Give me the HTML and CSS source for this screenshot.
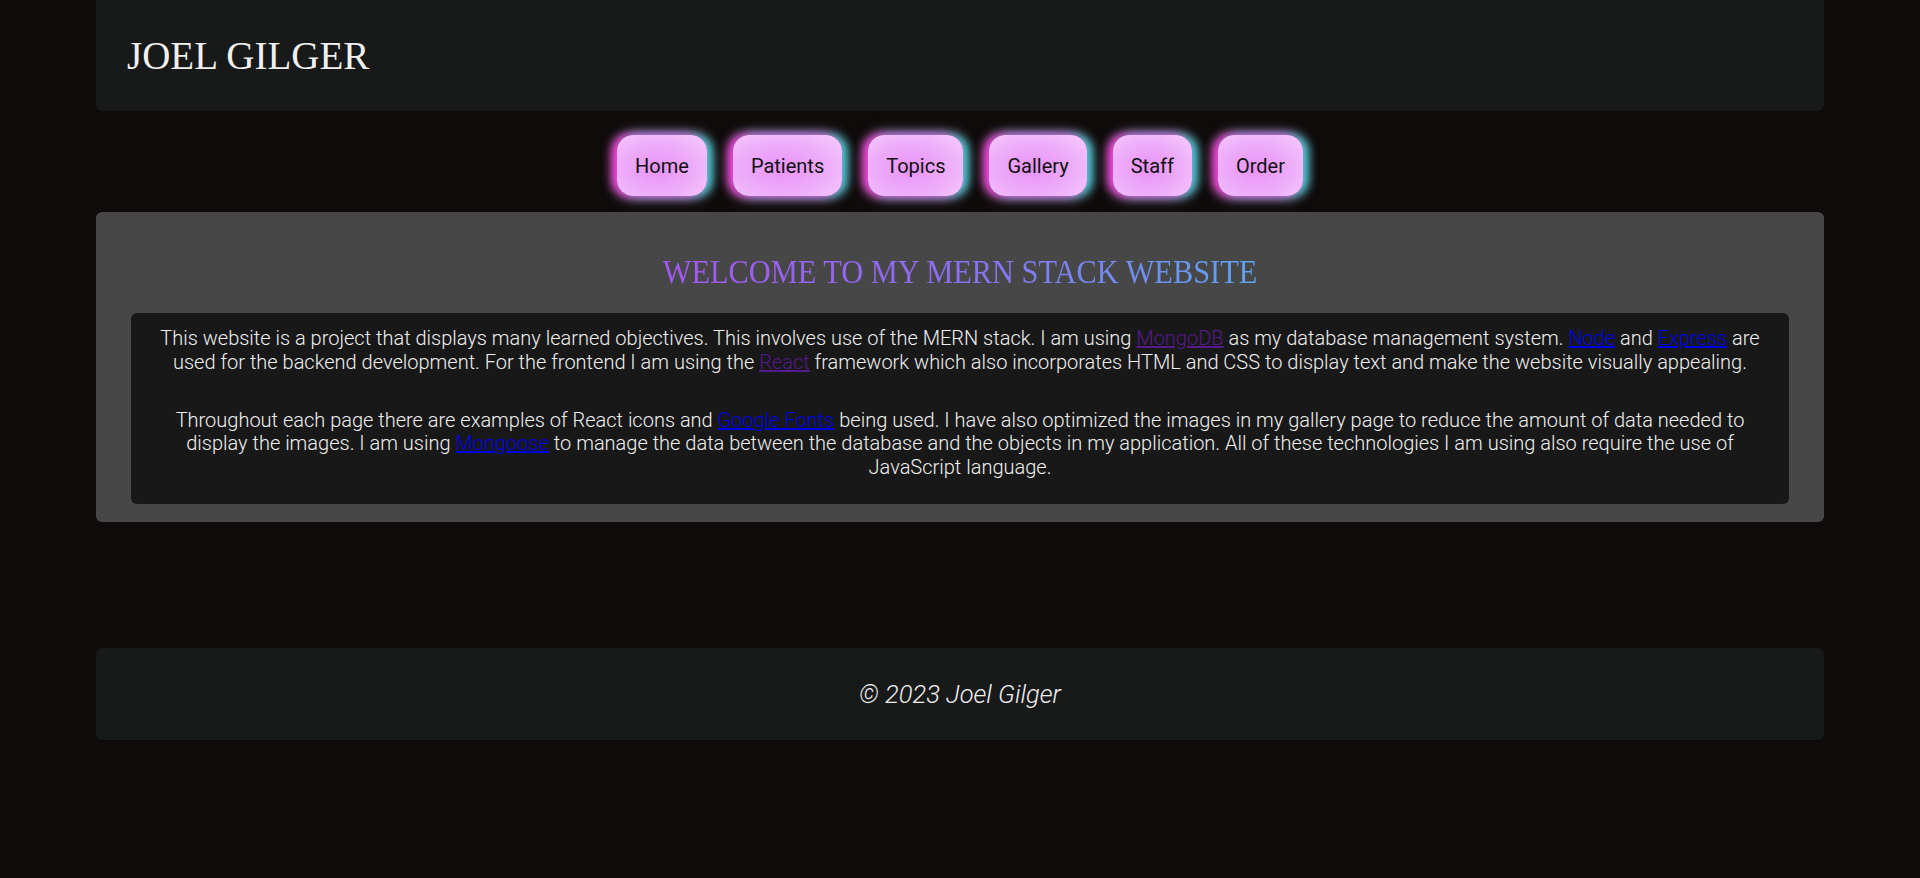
FILE: index.html
```html
<!DOCTYPE html>
<html lang="en">
<head>
<meta charset="utf-8">
<title>Joel Gilger</title>
<link rel="stylesheet" href="styles.css">
</head>
<body>
<header class="site-header">
  <h1 class="site-title">JOEL GILGER</h1>
</header>
<nav class="site-nav">
  <a class="nav-btn" href="#">Home</a>
  <a class="nav-btn" href="#">Patients</a>
  <a class="nav-btn" href="#">Topics</a>
  <a class="nav-btn" href="#">Gallery</a>
  <a class="nav-btn" href="#">Staff</a>
  <a class="nav-btn" href="#">Order</a>
</nav>
<main class="main">
  <h2 class="welcome">WELCOME TO MY MERN STACK WEBSITE</h2>
  <article class="intro">
    <p>This website is a project that displays many learned objectives. This involves use of the MERN stack. I am using <a class="visited" href="#">MongoDB</a> as my database management system. <a class="link" href="#">Node</a> and <a class="link" href="#">Express</a> are used for the backend development. For the frontend I am using the <a class="visited" href="#">React</a> framework which also incorporates HTML and CSS to display text and make the website visually appealing.</p>
    <p>Throughout each page there are examples of React icons and <a class="link" href="#">Google Fonts</a> being used. I have also optimized the images in my gallery page to reduce the amount of data needed to display the images. I am using <a class="link" href="#">Mongoose</a> to manage the data between the database and the objects in my application. All of these technologies I am using also require the use of JavaScript language.</p>
  </article>
</main>
<footer class="site-footer">
  <p class="copy">&copy; 2023 Joel Gilger</p>
</footer>
</body>
</html>
```
FILE: styles.css
```css
html, body {
  margin: 0;
  padding: 0;
}
body {
  background: #0e0b0a;
  font-family: Roboto, "Noto Sans", sans-serif;
  color: #f0f0f0;
  min-height: 878px;
}
.site-header {
  margin: 0 5%;
  height: 111px;
  background: #181919;
  border-radius: 0 0 6px 6px;
  display: flex;
  align-items: center;
  padding-left: 31px;
  box-sizing: border-box;
}
.site-title {
  margin: 0;
  font-family: "Liberation Serif", serif;
  font-weight: 400;
  font-size: 39px;
  color: #f0f0f0;
}
.site-nav {
  display: flex;
  justify-content: center;
  gap: 26px;
  padding: 24px 0 16px;
}
.nav-btn {
  display: block;
  height: 61px;
  box-sizing: border-box;
  padding: 0 18px;
  line-height: 62px;
  font-size: 20px;
  color: #111;
  text-decoration: none;
  border-radius: 16px;
  background: radial-gradient(ellipse at 45% 55%, #e992f8 0%, #eeaefa 55%, #f6cdfc 100%);
  box-shadow: -5px 0 10px #ff3fe4, 5px 0 10px #3fd8dc, 0 0 14px 2px rgba(240, 200, 255, 0.55);
}
.main {
  margin: 0 5%;
  background: #474747;
  border-radius: 6px;
  padding: 1px 35px 18px;
}
.welcome {
  margin: 39px auto 21px;
  text-align: center;
  font-family: "Liberation Serif", serif;
  font-weight: 400;
  font-size: 33px;
  line-height: 40px;
  color: transparent;
  background: linear-gradient(90deg, #a358f2 0%, #8c6ff2 50%, #5ea5f0 100%);
  -webkit-background-clip: text;
  background-clip: text;
  width: max-content;
  transform: scaleX(0.92);
}
.intro {
  background: #181818;
  border-radius: 6px;
  padding: 14px 20px 25px;
  text-align: center;
  font-weight: 300;
  font-size: 20px;
  line-height: 23.5px;
}
.intro p {
  margin: 0;
}
.intro p + p {
  margin-top: 34.5px;
}
.link {
  color: #0000ee;
}
.visited {
  color: #551a8b;
}
.site-footer {
  margin: 126px 5% 0;
  height: 92px;
  background: #181919;
  border-radius: 6px;
  display: flex;
  align-items: center;
  justify-content: center;
}
.copy {
  margin: 0;
  font-style: italic;
  font-weight: 300;
  font-size: 25.5px;
  color: #f0f0f0;
}
```
